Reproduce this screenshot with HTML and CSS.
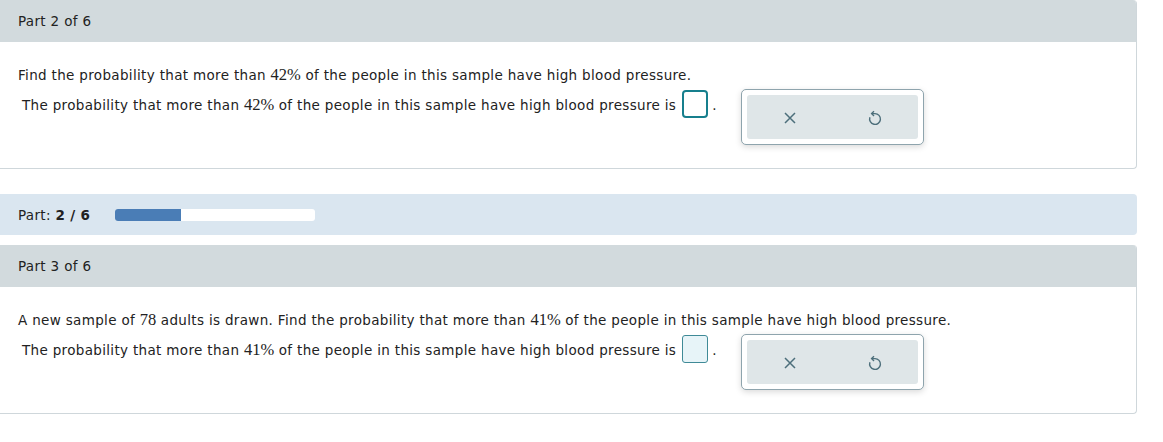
FILE: index.html
```html
<!DOCTYPE html>
<html>
<head>
<meta charset="utf-8">
<link rel="stylesheet" href="styles.css">
</head>
<body>
<div class="page">
  <section class="panel">
    <div class="panel-head">Part 2 of 6</div>
    <div class="panel-body">
      <p class="question">Find the probability that more than <span class="m">42%</span> of the people in this sample have high blood pressure.</p>
      <div class="answer-row">
        <span class="answer-text">The probability that more than <span class="m">42%</span> of the people in this sample have high blood pressure is</span>
        <span class="input active"></span>
        <span class="dot">.</span>
        <div class="toolbox">
          <div class="tools">
            <button class="tool"><svg width="14" height="14" viewBox="0 0 14 14"><path d="M2 2 L12 12 M12 2 L2 12" stroke="#4d6f7b" stroke-width="1.5" fill="none"/></svg></button>
            <button class="tool"><svg width="14" height="16" viewBox="0 0 14 16"><path d="M3.6 3.6 L7 3.6 A5.4 5.4 0 1 1 1.9 7.3" stroke="#4d6f7b" stroke-width="1.4" fill="none"/><path d="M6 1.2 L3.6 3.6 L6 6" stroke="#4d6f7b" stroke-width="1.4" fill="none"/></svg></button>
          </div>
        </div>
      </div>
    </div>
  </section>

  <div class="progress">
    <span class="progress-label">Part: <b>2 / 6</b></span>
    <div class="bar"><div class="fill" style="width:33%"></div></div>
  </div>

  <section class="panel">
    <div class="panel-head">Part 3 of 6</div>
    <div class="panel-body">
      <p class="question">A new sample of <span class="m">78</span> adults is drawn. Find the probability that more than <span class="m">41%</span> of the people in this sample have high blood pressure.</p>
      <div class="answer-row">
        <span class="answer-text">The probability that more than <span class="m">41%</span> of the people in this sample have high blood pressure is</span>
        <span class="input"></span>
        <span class="dot">.</span>
        <div class="toolbox">
          <div class="tools">
            <button class="tool"><svg width="14" height="14" viewBox="0 0 14 14"><path d="M2 2 L12 12 M12 2 L2 12" stroke="#4d6f7b" stroke-width="1.5" fill="none"/></svg></button>
            <button class="tool"><svg width="14" height="16" viewBox="0 0 14 16"><path d="M3.6 3.6 L7 3.6 A5.4 5.4 0 1 1 1.9 7.3" stroke="#4d6f7b" stroke-width="1.4" fill="none"/><path d="M6 1.2 L3.6 3.6 L6 6" stroke="#4d6f7b" stroke-width="1.4" fill="none"/></svg></button>
          </div>
        </div>
      </div>
    </div>
  </section>
</div>
</body>
</html>
```
FILE: styles.css
```css
* { box-sizing: border-box; }
html, body { margin: 0; padding: 0; background: #fff; }
body {
  font-family: "DejaVu Sans", Verdana, sans-serif;
  font-size: 13.5px;
  letter-spacing: 0.33px;
  color: #222;
}
.page {
  width: 1137px;
}
.panel {
  border: 1px solid #cfd7db;
  border-left: none;
  border-top: none;
  border-radius: 0 4px 4px 0;
  overflow: hidden;
}
.panel-head {
  height: 42px;
  background: #d2dadd;
  padding: 0 18px;
  display: flex;
  align-items: center;
  line-height: 18px;
}
.panel-body {
  padding: 24px 18px 23px;
}
.question {
  margin: 0;
  line-height: 18px;
}
.m {
  font-family: "Liberation Serif", "Times New Roman", serif;
  font-size: 16.5px;
  letter-spacing: 0;
}
.answer-row {
  margin-top: 5px;
  display: flex;
  align-items: flex-start;
  padding-left: 4px;
}
.answer-text {
  line-height: 18px;
  margin-top: 7px;
}
.input {
  width: 26px;
  height: 28px;
  margin: 1px 0 0 6px;
  border: 2px solid #177f8d;
  border-radius: 4px;
  background: #fff;
}
.input:not(.active) {
  border: 1px solid #3f8a97;
  background: #e7f4f8;
  border-radius: 3px;
}
.dot {
  margin: 7px 0 0 4px;
  line-height: 18px;
}
.toolbox {
  margin-left: 24px;
  width: 183px;
  height: 56px;
  border: 1px solid #8ea4ad;
  border-radius: 5px;
  padding: 5px;
  background: #fff;
  box-shadow: 0 2px 6px rgba(0, 0, 0, 0.15);
}
.tools {
  height: 100%;
  background: #dfe6e8;
  border-radius: 3px;
  display: flex;
}
.tool {
  flex: 1;
  border: none;
  background: transparent;
  display: flex;
  align-items: center;
  justify-content: center;
  padding: 0;
  padding-top: 2px;
}
.progress {
  margin: 25px 0 10px;
  height: 41px;
  background: #dae6f0;
  border-radius: 0 4px 4px 0;
  display: flex;
  align-items: center;
  padding: 0 18px;
}
.progress-label {
  width: 97px;
}
.bar {
  width: 200px;
  height: 12px;
  background: #fff;
  border-radius: 3px;
  overflow: hidden;
}
.fill {
  height: 100%;
  background: #4a7db6;
}
```
